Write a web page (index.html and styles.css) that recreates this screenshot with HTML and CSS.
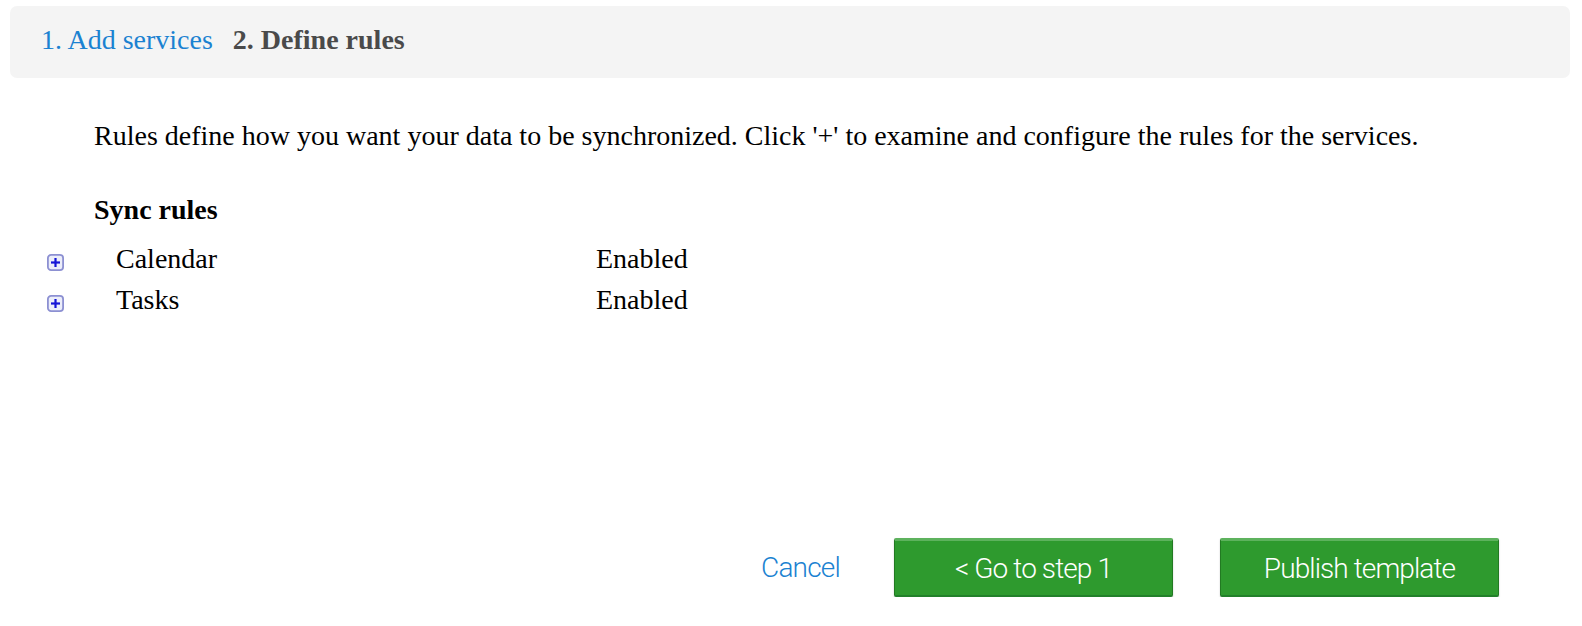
FILE: index.html
```html
<!DOCTYPE html>
<html>
<head>
<meta charset="utf-8">
<link rel="stylesheet" href="styles.css">
</head>
<body>
<div class="steps">
  <a class="step-link" href="#">1. Add services</a>
  <span class="step-current">2. Define rules</span>
</div>
<div class="content">
  <p class="intro">Rules define how you want your data to be synchronized. Click '+' to examine and configure the rules for the services.</p>
  <h3 class="section-title">Sync rules</h3>
</div>
<div class="rules">
  <div class="rule">
    <span class="expander"><svg width="17" height="17" viewBox="0 0 17 17"><rect x="0.9" y="0.9" width="15.2" height="15.2" rx="3.2" fill="#eceefa" stroke="#8c90d2" stroke-width="1.8"/><rect x="4" y="7.4" width="9" height="2.2" fill="#1414d6"/><rect x="7.4" y="4" width="2.2" height="9" fill="#1414d6"/></svg></span>
    <span class="rule-name">Calendar</span>
    <span class="rule-status">Enabled</span>
  </div>
  <div class="rule">
    <span class="expander"><svg width="17" height="17" viewBox="0 0 17 17"><rect x="0.9" y="0.9" width="15.2" height="15.2" rx="3.2" fill="#eceefa" stroke="#8c90d2" stroke-width="1.8"/><rect x="4" y="7.4" width="9" height="2.2" fill="#1414d6"/><rect x="7.4" y="4" width="2.2" height="9" fill="#1414d6"/></svg></span>
    <span class="rule-name">Tasks</span>
    <span class="rule-status">Enabled</span>
  </div>
</div>
<div class="actions">
  <a class="cancel" href="#">Cancel</a>
  <button class="btn">&lt; Go to step 1</button>
  <button class="btn">Publish template</button>
</div>
</body>
</html>
```
FILE: styles.css
```css
html, body {
  margin: 0;
  padding: 0;
  background: #fff;
}
body {
  padding: 6px 12px 0 10px;
  font-family: "Liberation Serif", "Times New Roman", serif;
  color: #000;
}
.steps {
  height: 72px;
  background: #f4f4f4;
  border-radius: 7px;
  display: flex;
  align-items: center;
  padding-left: 31px;
  padding-bottom: 4px;
  gap: 20px;
  font-size: 28px;
  box-sizing: border-box;
}
.step-link {
  color: #1b82d1;
  text-decoration: none;
}
.step-current {
  color: #4a4a4a;
  font-weight: bold;
}
.content {
  padding-left: 84px;
}
.intro {
  margin: 42px 0 0 0;
  font-size: 28px;
  line-height: 32px;
}
.section-title {
  margin: 42px 0 0 0;
  font-size: 28px;
  line-height: 32px;
}
.rules {
  margin-top: 12px;
  padding-left: 37px;
}
.rule {
  display: flex;
  align-items: center;
  height: 41px;
  font-size: 28px;
}
.expander {
  width: 17px;
  height: 17px;
  margin-right: 52px;
  margin-top: 8px;
  display: block;
}
.expander svg {
  display: block;
}
.rule-name {
  width: 480px;
}
.actions {
  display: flex;
  justify-content: flex-end;
  align-items: center;
  gap: 47px;
  margin-top: 218px;
  padding-right: 71px;
}
.cancel {
  font-family: Roboto, "Liberation Sans", Arial, sans-serif;
  font-weight: 300;
  font-size: 28px;
  color: #1b82d1;
  text-decoration: none;
  letter-spacing: -0.8px;
  margin-right: 7px;
}
.btn {
  width: 279px;
  height: 59px;
  padding: 0;
  background: #2e9a2e;
  border: 1px solid #227a22;
  border-top: 3px solid #5db25d;
  border-bottom: 2px solid #22802a;
  border-radius: 2px;
  color: #fff;
  font-family: Roboto, "Liberation Sans", Arial, sans-serif;
  font-weight: 300;
  font-size: 28px;
  letter-spacing: -0.9px;
  box-shadow: 0 1px 2px rgba(0,0,0,0.2);
}
```
